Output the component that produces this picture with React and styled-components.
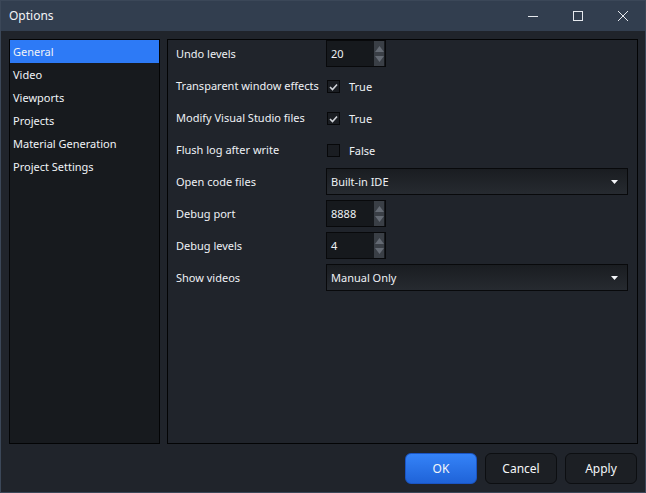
import React from "react";
import styled, { createGlobalStyle } from "styled-components";

const GlobalStyle = createGlobalStyle`
  html, body {
    margin: 0;
    padding: 0;
    background: #20242b;
  }
  * {
    box-sizing: border-box;
  }
`;

const Window = styled.div`
  width: 646px;
  height: 493px;
  display: flex;
  flex-direction: column;
  border: 1px solid #3b4758;
  background: #20242b;
  font-family: "Noto Sans", "Open Sans", sans-serif;
  font-size: 11px;
  color: #eef1f5;
`;

const TitleBar = styled.div`
  height: 30px;
  display: flex;
  align-items: center;
  background: #323e4f;
  padding-left: 8px;
`;

const Title = styled.div`
  flex: 1;
  font-size: 12px;
  color: #f2f4f7;
  margin-top: -1px;
`;

const WinButton = styled.div`
  width: 45px;
  height: 30px;
  display: flex;
  align-items: center;
  justify-content: center;
  margin-top: -1px;
`;

const Body = styled.div`
  flex: 1;
  display: flex;
  flex-direction: column;
  padding: 8px 7px 8px 8px;
`;

const Main = styled.div`
  height: 405px;
  display: flex;
  gap: 7px;
`;

const Sidebar = styled.div`
  width: 151px;
  border: 1px solid #030405;
  background: #171a1e;
`;

const NavItem = styled.div`
  height: 23px;
  display: flex;
  align-items: center;
  padding-left: 3px;
  background: ${(p) => (p.$active ? "#2d7af6" : "transparent")};
  color: #f0f3f7;
`;

const Panel = styled.div`
  flex: 1;
  border: 1px solid #030405;
  background: #20242b;
  padding: 0 9px 0 8px;
  display: flex;
  flex-direction: column;
  gap: 5px;
`;

const Row = styled.div`
  height: 27px;
  display: grid;
  grid-template-columns: 150px 1fr;
  align-items: center;
`;

const Label = styled.div`
  color: #eef1f5;
`;

const Spin = styled.div`
  width: 60px;
  height: 27px;
  border: 1px solid #08090b;
  background: #16191d;
  display: flex;
  align-items: center;
  justify-content: space-between;
  padding-left: 4px;
`;

const SpinButtons = styled.div`
  width: 10px;
  height: 100%;
  margin-right: 1px;
  display: flex;
  flex-direction: column;
  background: #3a3f46;
`;

const SpinHalf = styled.div`
  flex: 1;
  display: flex;
  align-items: ${(p) => (p.$up ? "flex-end" : "flex-start")};
  justify-content: center;
  padding: ${(p) => (p.$up ? "0 0 2px" : "2px 0 0")};
`;

const CheckRow = styled.div`
  display: flex;
  align-items: center;
  gap: 9px;
  padding-left: 1px;
  margin-top: 2px;
`;

const Box = styled.div`
  width: 13px;
  height: 13px;
  border: 1px solid #07080a;
  background: #1a1d22;
  display: flex;
  align-items: center;
  justify-content: center;
`;

const Select = styled.div`
  width: 302px;
  height: 27px;
  border: 1px solid #08090b;
  background: linear-gradient(#1a1d21, #262a30);
  display: flex;
  align-items: center;
  justify-content: space-between;
  padding: 0 9px 0 4px;
`;

const Footer = styled.div`
  flex: 1;
  display: flex;
  justify-content: flex-end;
  align-items: flex-start;
  gap: 8px;
  padding-top: 9px;
  padding-right: 1px;
`;

const Button = styled.div`
  width: 72px;
  height: 31px;
  border-radius: 6px;
  display: flex;
  align-items: center;
  justify-content: center;
  font-size: 12px;
  color: #f4f6f9;
  border: 1px solid ${(p) => (p.$primary ? "#1a55c4" : "#0c0e11")};
  background: ${(p) =>
    p.$primary ? "linear-gradient(#3583f8, #1f63d8)" : "#1c1f24"};
`;

const Tri = ({ up, color = "#646a73" }) => (
  <svg width="9" height="6" viewBox="0 0 9 6">
    <path d={up ? "M0 6 L4.5 0 L9 6 Z" : "M0 0 L4.5 6 L9 0 Z"} fill={color} />
  </svg>
);

const Spinner = ({ value }) => (
  <Spin>
    <span>{value}</span>
    <SpinButtons>
      <SpinHalf $up>
        <Tri up />
      </SpinHalf>
      <SpinHalf>
        <Tri />
      </SpinHalf>
    </SpinButtons>
  </Spin>
);

const Check = ({ checked, text }) => (
  <CheckRow>
    <Box>
      {checked && (
        <svg width="9" height="8" viewBox="0 0 9 8">
          <path d="M1 4 L3.5 6.5 L8 1.5" stroke="#d0d3d8" strokeWidth="1.6" fill="none" />
        </svg>
      )}
    </Box>
    <span>{text}</span>
  </CheckRow>
);

const Dropdown = ({ value }) => (
  <Select>
    <span>{value}</span>
    <svg width="7" height="4" viewBox="0 0 7 4">
      <path d="M0 0 L7 0 L3.5 4 Z" fill="#f4f6f9" />
    </svg>
  </Select>
);

const nav = ["General", "Video", "Viewports", "Projects", "Material Generation", "Project Settings"];

const App = () => {
  return (
    <>
      <GlobalStyle />
      <Window>
        <TitleBar>
          <Title>Options</Title>
          <WinButton>
            <svg width="10" height="10" viewBox="0 0 10 10">
              <path d="M0 5.5 H10" stroke="#e6e9ee" strokeWidth="1" />
            </svg>
          </WinButton>
          <WinButton>
            <svg width="10" height="10" viewBox="0 0 10 10">
              <rect x="0.5" y="0.5" width="9" height="9" stroke="#e6e9ee" strokeWidth="1" fill="none" />
            </svg>
          </WinButton>
          <WinButton>
            <svg width="10" height="10" viewBox="0 0 10 10">
              <path d="M0 0 L10 10 M10 0 L0 10" stroke="#e6e9ee" strokeWidth="1" />
            </svg>
          </WinButton>
        </TitleBar>
        <Body>
          <Main>
            <Sidebar>
              {nav.map((n, i) => (
                <NavItem key={n} $active={i === 0}>
                  {n}
                </NavItem>
              ))}
            </Sidebar>
            <Panel>
              <Row>
                <Label>Undo levels</Label>
                <Spinner value="20" />
              </Row>
              <Row>
                <Label>Transparent window effects</Label>
                <Check checked text="True" />
              </Row>
              <Row>
                <Label>Modify Visual Studio files</Label>
                <Check checked text="True" />
              </Row>
              <Row>
                <Label>Flush log after write</Label>
                <Check text="False" />
              </Row>
              <Row>
                <Label>Open code files</Label>
                <Dropdown value="Built-in IDE" />
              </Row>
              <Row>
                <Label>Debug port</Label>
                <Spinner value="8888" />
              </Row>
              <Row>
                <Label>Debug levels</Label>
                <Spinner value="4" />
              </Row>
              <Row>
                <Label>Show videos</Label>
                <Dropdown value="Manual Only" />
              </Row>
            </Panel>
          </Main>
          <Footer>
            <Button $primary>OK</Button>
            <Button>Cancel</Button>
            <Button>Apply</Button>
          </Footer>
        </Body>
      </Window>
    </>
  );
};

export default App;
